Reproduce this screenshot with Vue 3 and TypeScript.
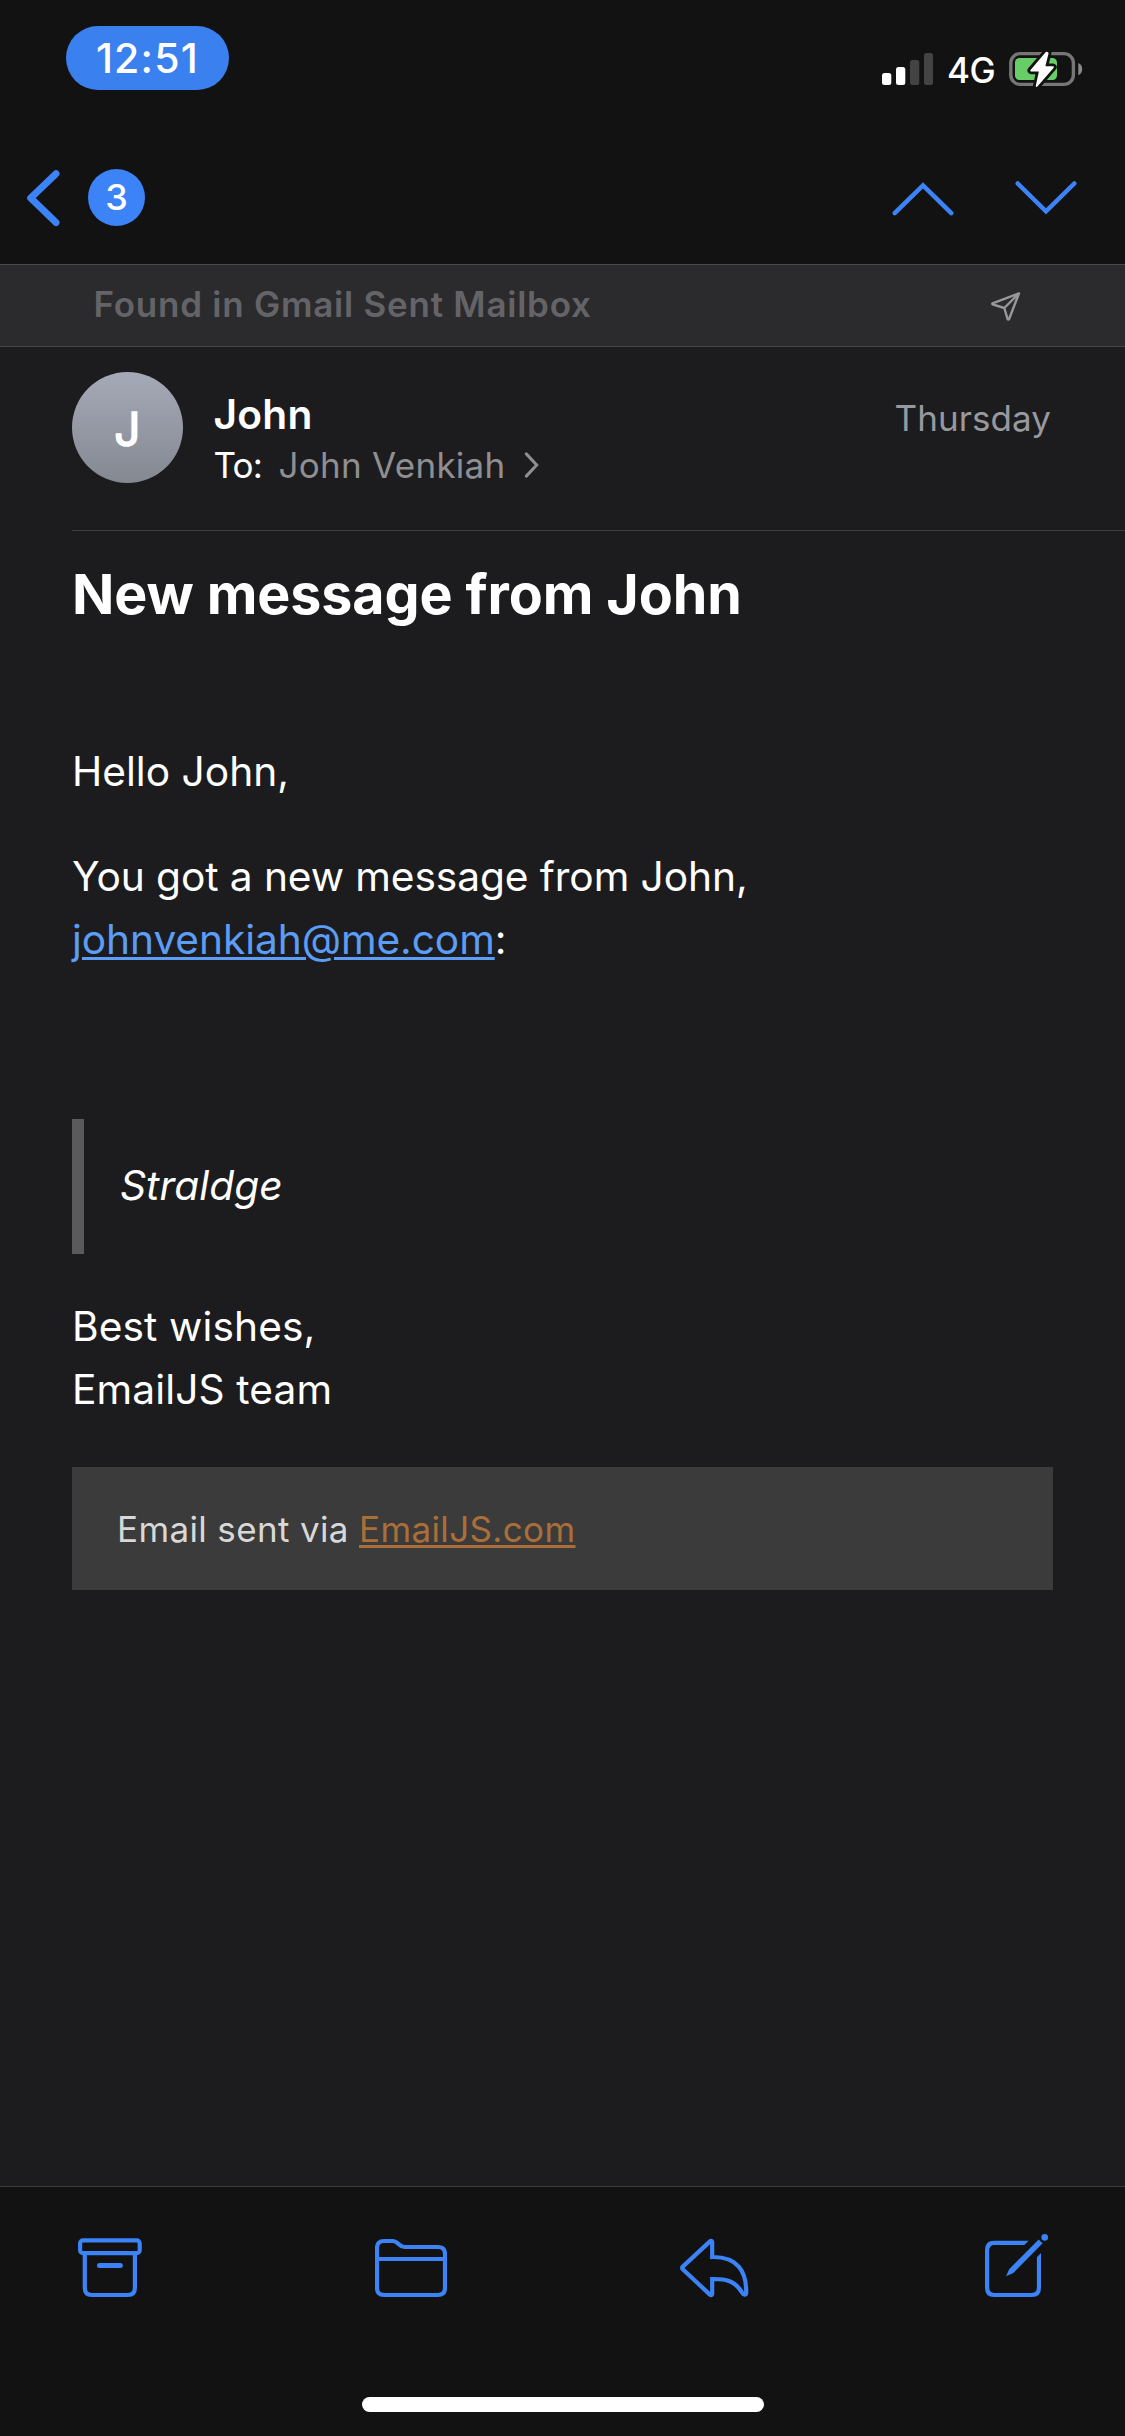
<script setup lang="ts">
interface Mail {
  sender: string
  initial: string
  recipient: string
  date: string
  subject: string
}

const unread = 3
const mail: Mail = {
  sender: 'John',
  initial: 'J',
  recipient: 'John Venkiah',
  date: 'Thursday',
  subject: 'New message from John',
}
</script>

<template>
  <div class="screen">
    <header class="top">
      <div class="status">
        <div class="clock"><span>12:51</span></div>
        <div class="indicators">
          <svg class="signal" width="51" height="32" viewBox="0 0 51 32">
            <rect x="0" y="20" width="9.3" height="12" rx="2.5" fill="#fff" />
            <rect x="14" y="14" width="9.3" height="18" rx="2.5" fill="#fff" />
            <rect x="28" y="7" width="9.3" height="25" rx="2.5" fill="#434343" />
            <rect x="42" y="0" width="9" height="32" rx="2.5" fill="#434343" />
          </svg>
          <span class="network">4G</span>
          <svg class="battery" width="74" height="38" viewBox="0 0 74 38">
            <rect x="1.8" y="3.6" width="62.6" height="30.8" rx="9.5" fill="none" stroke="#767676" stroke-width="3.4" />
            <rect x="6" y="8" width="42" height="22" rx="4.5" fill="#67ce67" />
            <path d="M69.3 13c5.200 1.600 5.200 10.600 0 12.200z" fill="#8a8a8a" />
            <path
              d="M37.500 2.700L22.200 20.500H31L27.700 36L44 17.200H35.200L38.700 3Z"
              fill="#fff" stroke="#121212" stroke-width="7.400" stroke-linejoin="round"
            />
            <path
              d="M37.500 2.700L22.200 20.500H31L27.700 36L44 17.200H35.200L38.700 3Z"
              fill="#fff" stroke="#fff" stroke-width="1.800" stroke-linejoin="round"
            />
          </svg>
        </div>
      </div>
      <nav class="nav">
        <svg class="back" width="36" height="60" viewBox="0 0 36 60">
          <path d="M31 5.700L5.700 30L31 54.500" />
        </svg>
        <span class="count">{{ unread }}</span>
        <svg class="arrow up" width="64" height="36" viewBox="0 0 64 36">
          <path d="M3.700 32.200L32 4.300L60.300 32.200" />
        </svg>
        <svg class="arrow" width="64" height="36" viewBox="0 0 64 36">
          <path d="M3.700 3.500L32 31.300L60.300 3.500" />
        </svg>
      </nav>
    </header>

    <div class="banner">
      <span>Found in Gmail Sent Mailbox</span>
      <svg width="32" height="32" viewBox="0 0 32 32">
        <path d="M29 3.400L2.500 13.300Q2 13.800 2.600 14.300L14.300 18L17.600 29.200Q18.300 30 19 29.200ZL14.300 18" />
      </svg>
    </div>

    <main class="mail">
      <section class="people">
        <div class="avatar"><span>{{ mail.initial }}</span></div>
        <div class="names">
          <div class="sender">{{ mail.sender }}</div>
          <div class="to">
            <span class="label">To:</span>
            <span class="recipient">{{ mail.recipient }}</span>
            <svg width="18" height="28" viewBox="0 0 18 28">
              <path d="M3.300 2.900L13.700 14L3.300 25.100" />
            </svg>
          </div>
        </div>
        <div class="date">{{ mail.date }}</div>
      </section>

      <h1 class="subject">{{ mail.subject }}</h1>

      <article class="body">
        <p class="hello">Hello John,</p>
        <p class="intro">
          You got a new message from John,<br />
          <a class="address">johnvenkiah@me.com</a>:
        </p>
        <blockquote>Straldge</blockquote>
        <p class="regards">
          <span>Best wishes,</span><br />
          <span>EmailJS team</span>
        </p>
        <div class="via">Email sent via <a>EmailJS.com</a></div>
      </article>
    </main>

    <footer class="bottom">
      <div class="tools">
        <svg class="archive" width="64" height="64" viewBox="0 0 64 64">
          <rect x="2.100" y="6.400" width="59.600" height="12.800" rx="3" />
          <path d="M6.800 19.200V54Q6.800 61 13.800 61H49.900Q56.900 61 56.900 54V19.200" />
          <path d="M21.500 31.600H42.300" stroke-width="5" />
        </svg>
        <svg class="folder" width="72" height="64" viewBox="0 0 72 64">
          <path d="M2 54V14Q2 7 9 7H17.500C23.500 7 23.500 13 29.500 13H63Q70 13 70 20V54Q70 61 63 61H9Q2 61 2 54Z" />
          <path d="M2 25H70" />
        </svg>
        <svg class="reply" width="70" height="64" viewBox="0 0 70 64">
          <path d="M32.200 8Q31.500 6 29.700 7.600L2.800 32.600Q1.400 34 2.800 35.300L29.700 60.400Q31.500 62 32.200 60V45C46 44.800 55 46.600 62 58.500C64 62 66.200 61 66.200 58.500C66.500 38 58 22.600 32.200 23Z" stroke-linejoin="miter" />
        </svg>
        <svg class="compose" width="65" height="64" viewBox="0 0 65 64">
          <path d="M43.700 6.700L39.300 10.900H9.500Q4.200 10.900 4.200 16.500V53.500Q4.200 58.900 9.500 58.900H46.500Q51.900 58.900 51.900 53.500V23.300L56 18.900V54Q56 63 47 63H9Q0 63 0 54V16Q0 6.700 9 6.700Z" class="solid" />
          <path d="M53.700 5.500L57.600 9.300L28.300 39L21 42.300L24.300 34.900Z" class="solid" />
          <circle cx="59.700" cy="3.400" r="3.300" class="solid" />
        </svg>
      </div>
      <div class="home"></div>
    </footer>
  </div>
</template>

<style>
body {
  background: #1c1c1e;
}
</style>

<style scoped>
.screen {
  display: flex;
  flex-direction: column;
  box-sizing: border-box;
  width: 1125px;
  height: 2436px;
  overflow: hidden;
  background: #1c1c1e;
  color: #fff;
  font-family: Inter, "Liberation Sans", sans-serif;
  white-space: nowrap;
}

.screen svg {
  display: block;
  flex: none;
}

.top {
  height: 264px;
  flex: none;
  background: #121212;
}

.status {
  display: flex;
  justify-content: space-between;
  align-items: flex-start;
  height: 167px;
}

.clock {
  display: flex;
  align-items: center;
  justify-content: center;
  box-sizing: border-box;
  width: 163px;
  height: 64px;
  margin: 26px 0 0 65.5px;
  padding-left: 1px;
  border-radius: 32px;
  background: #3a80ef;
  font-size: 41px;
  font-weight: 500;
  letter-spacing: 1.23px;
}

.indicators {
  display: flex;
  align-items: center;
  margin: 50px 42px 0 0;
  height: 38px;
}

.network {
  margin-left: 14px;
  font-size: 35px;
  line-height: 38px;
  padding-top: 1px;
  font-weight: 500;
  letter-spacing: -0.4px;
  width: 62px;
}

.nav {
  display: flex;
  align-items: center;
  height: 61px;
}

.back {
  margin-left: 25px;
  fill: none;
  stroke: #3b83f7;
  stroke-width: 7;
  stroke-linecap: round;
  stroke-linejoin: round;
}

.count {
  width: 57px;
  height: 57px;
  margin-left: 27px;
  border-radius: 50%;
  background: #3b83f7;
  font-size: 36px;
  font-weight: 500;
  line-height: 57px;
  text-align: center;
}

.arrow {
  margin: 0 47px 0 59px;
  fill: none;
  stroke: #3b83f7;
  stroke-width: 4.5;
  stroke-linecap: round;
}

.arrow.up {
  margin: 2px 0 0 auto;
}

.banner {
  display: flex;
  align-items: center;
  justify-content: space-between;
  box-sizing: border-box;
  height: 83px;
  flex: none;
  padding: 0 103px 0 93.5px;
  border-top: 1px solid #4a4a4a;
  border-bottom: 1px solid #424247;
  background: #2b2b2d;
  color: #646468;
  font-size: 35px;
  font-weight: 600;
  line-height: 82px;
  letter-spacing: 0.76px;
}

.banner span {
  margin-top: -4px;
}

.banner svg {
  fill: none;
  stroke: #989898;
  stroke-width: 2.4;
  stroke-linejoin: round;
}

.mail {
  flex: 1;
  padding-left: 72px;
}

.people {
  display: flex;
  box-sizing: border-box;
  height: 184px;
  padding-top: 25px;
  border-bottom: 1px solid #3d3d41;
}

.avatar {
  width: 111px;
  height: 111px;
  border-radius: 50%;
  background: linear-gradient(#a6aab8, #848891);
  font-size: 46px;
  font-weight: 400;
  line-height: 115px;
  text-align: center;
  -webkit-text-stroke: 1.6px #fff;
  stroke-linejoin: round;
}

.names {
  margin-left: 30.5px;
}

.sender {
  margin-top: 18px;
  font-size: 40.7px;
  font-weight: 600;
  line-height: 50px;
  letter-spacing: 0.24px;
}

.to {
  display: flex;
  align-items: center;
  margin-top: 1px;
  font-size: 35px;
  line-height: 48px;
}

.label {
  width: 65px;
  letter-spacing: -0.77px;
}

.recipient {
  color: #8f8f92;
  letter-spacing: 0.28px;
}

.to svg {
  margin: 0 0 0 17.5px;
  fill: none;
  stroke: #8f8f92;
  stroke-width: 3;
  stroke-linecap: round;
}

.date {
  margin: 21px 74px 0 auto;
  color: #98989f;
  font-size: 35px;
  line-height: 50px;
  letter-spacing: 0.07px;
}

.subject {
  margin: 30px 0 112.5px;
  font-size: 55.6px;
  font-weight: 700;
  line-height: 66px;
  letter-spacing: -0.12px;
}

.body {
  font-size: 40.7px;
  line-height: 63px;
}

.body p {
  margin: 0;
}

.body .hello {
  margin-bottom: 42px;
}

.intro {
  letter-spacing: -0.09px;
}

.address {
  color: #5b9df7;
  text-decoration: underline;
  text-decoration-thickness: 3px;
  text-underline-offset: 3px;
}

blockquote {
  margin: 148px 0 41px;
  padding: 35px 36px 37px;
  border-left: 12px solid #5a5a5a;
  font-style: italic;
  letter-spacing: 0.05px;
}

.regards {
  letter-spacing: 0.1px;
}

.via {
  box-sizing: border-box;
  width: 981px;
  height: 123px;
  margin-top: 46px;
  padding-left: 45px;
  background: #3b3b3b;
  color: #d8d8d8;
  font-size: 35px;
  line-height: 125px;
  letter-spacing: 0.36px;
}

.via a {
  color: #aa6f38;
  text-decoration: underline;
  text-decoration-thickness: 2.5px;
  text-underline-offset: 3px;
}

.bottom {
  box-sizing: border-box;
  height: 250px;
  flex: none;
  border-top: 1px solid #3b3b3b;
  background: #121212;
}

.tools {
  display: flex;
  align-items: flex-start;
  height: 210px;
  box-sizing: border-box;
  padding: 47px 75px 0 78px;
}

.tools svg {
  fill: none;
  stroke: #3b83f7;
  stroke-width: 4.2;
  stroke-linejoin: round;
  stroke-linecap: round;
}

.folder,
.reply {
  margin-left: 233px;
}

.compose {
  margin-left: 235px;
}

.tools .solid {
  fill: #3b83f7;
  stroke: none;
}

.home {
  width: 402px;
  height: 15px;
  margin: 0 auto;
  border-radius: 7.5px;
  background: #fff;
}
</style>
